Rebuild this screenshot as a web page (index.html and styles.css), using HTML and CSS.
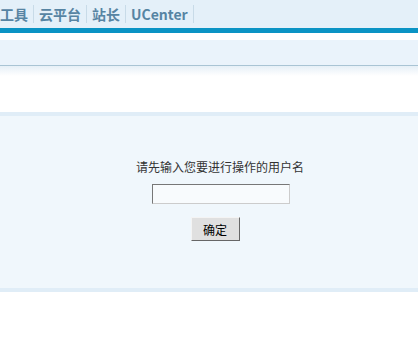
FILE: index.html
```html
<!DOCTYPE html>
<html lang="zh-CN">
<head>
    <meta charset="UTF-8">
    <title>用户管理</title>
    <link rel="stylesheet" href="styles.css">
</head>
<body>
    <div class="header">
        <div class="nav">
            <a href="#" class="nav-link">工具</a>
            <a href="#" class="nav-link">云平台</a>
            <a href="#" class="nav-link">站长</a>
            <a href="#" class="nav-link">UCenter</a>
        </div>
    </div>
    <div class="subbar"></div>
    <div class="subbar-shadow"></div>

    <div class="main-box">
        <form class="user-form">
            <p class="prompt">请先输入您要进行操作的用户名</p>
            <input type="text" class="user-input">
            <button type="button" class="btn">确定</button>
        </form>
    </div>
</body>
</html>
```

FILE: styles.css
```css
* {
    margin: 0;
    padding: 0;
    box-sizing: border-box;
}

body {
    font-family: "Noto Sans CJK SC", "Liberation Sans", sans-serif;
    font-size: 12px;
    color: #333;
    background: #fff;
}

.header {
    height: 33px;
    background: #e4f0f9;
    border-bottom: 5px solid #0a93c4;
}

.nav {
    display: flex;
    align-items: center;
    height: 28px;
}

.nav-link {
    display: block;
    padding: 0 5px;
    line-height: 18px;
    font-size: 14px;
    font-weight: bold;
    color: #5684a3;
    text-decoration: none;
    border-right: 1px solid #c8dbe8;
}

.nav-link:first-child {
    padding-left: 0;
}

.subbar {
    margin-top: 7px;
    height: 26px;
    background: #eaf3fb;
    border-bottom: 1px solid #a9c4d4;
}

.subbar-shadow {
    height: 10px;
    background: linear-gradient(#e6f0f7, #fff);
}

.main-box {
    margin-top: 36px;
    height: 180px;
    background: #f0f7fc;
    border-top: 4px solid #e0edf7;
    border-bottom: 4px solid #e0edf7;
}

.user-form {
    display: flex;
    flex-direction: column;
    align-items: center;
    padding: 43px 0 0 22px;
}

.prompt {
    line-height: 16px;
    color: #333;
}

.user-input {
    margin: 9px 0 0 2px;
    width: 138px;
    height: 20px;
    border: 1px solid;
    border-color: #777 #ccc #ccc #777;
    background: #f8fbfd;
}

.btn {
    margin: 13px 10px 0 0;
    width: 49px;
    height: 24px;
    font-family: inherit;
    font-size: 12px;
    color: #000;
    background: #e0e0e0;
    border: 1px solid;
    border-color: #f4f4f4 #666 #666 #f4f4f4;
}
```
